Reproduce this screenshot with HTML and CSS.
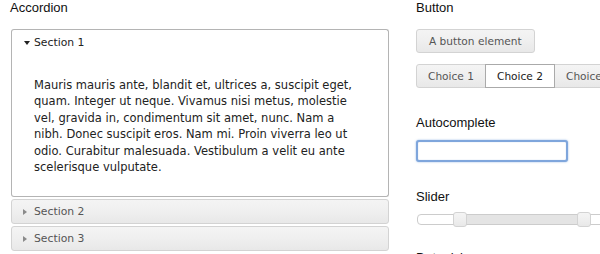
FILE: index.html
```html
<!DOCTYPE html>
<html lang="en">
<head>
<meta charset="utf-8">
<title>Widgets</title>
<link rel="stylesheet" href="styles.css">
</head>
<body>
<div class="page">
  <div class="col col-left">
    <h2 class="title">Accordion</h2>
    <div class="accordion">
      <div class="acc-header is-active"><span class="icon"><span class="tri tri-down"></span></span>Section 1</div>
      <div class="acc-panel">
        <p>Mauris mauris ante, blandit et, ultrices a, suscipit eget, quam. Integer ut neque. Vivamus nisi metus, molestie vel, gravida in, condimentum sit amet, nunc. Nam a nibh. Donec suscipit eros. Nam mi. Proin viverra leo ut odio. Curabitur malesuada. Vestibulum a velit eu ante scelerisque vulputate.</p>
      </div>
      <div class="acc-header"><span class="icon"><span class="tri tri-right"></span></span>Section 2</div>
      <div class="acc-header"><span class="icon"><span class="tri tri-right"></span></span>Section 3</div>
    </div>
  </div>
  <div class="col col-right">
    <section class="demo">
      <h2 class="title">Button</h2>
      <div class="demo-body">
        <button class="btn" type="button">A button element</button>
        <div class="buttonset">
          <button class="btn btn-seg" type="button">Choice 1</button>
          <button class="btn btn-seg is-active" type="button">Choice 2</button>
          <button class="btn btn-seg" type="button">Choice 3</button>
        </div>
      </div>
    </section>
    <section class="demo">
      <h2 class="title">Autocomplete</h2>
      <div class="demo-body">
        <input class="input is-focus" type="text">
      </div>
    </section>
    <section class="demo">
      <h2 class="title">Slider</h2>
      <div class="demo-body">
        <div class="slider">
          <div class="slider-range" style="left:21.2%; right:16.2%;"></div>
          <span class="slider-handle" style="left:21.2%;"></span>
          <span class="slider-handle" style="left:83.8%;"></span>
        </div>
      </div>
    </section>
    <section class="demo">
      <h2 class="title">Datepicker</h2>
    </section>
  </div>
</div>
</body>
</html>
```

FILE: styles.css
```css
html, body {
  margin: 0;
  padding: 0;
  overflow: hidden;
  background: #ffffff;
}

.page {
  display: flex;
  gap: 26px;
  padding-left: 10px;
  width: 700px;
  font-family: "DejaVu Sans", Verdana, sans-serif;
  color: #222222;
}

.col {
  flex: none;
  display: flex;
  flex-direction: column;
}

.col-left {
  width: 380px;
}

.col-right {
  width: 260px;
}

.title {
  margin: 0;
  font-family: "Liberation Sans", Arial, sans-serif;
  font-size: 13px;
  line-height: 16px;
  font-weight: normal;
  color: #111111;
}

/* Accordion */
.accordion {
  margin: 13px 0 0 1px;
  width: 378px;
  display: flex;
  flex-direction: column;
}

.acc-header {
  display: flex;
  align-items: center;
  height: 23px;
  padding-left: 11px;
  border: 1px solid #d3d3d3;
  border-radius: 3px;
  background: linear-gradient(to bottom, #f4f4f4 0%, #efefef 50%, #e8e8e8 100%);
  color: #555555;
  font-size: 10.8px;
  line-height: 15px;
  margin-top: 2px;
}

.acc-header.is-active {
  margin-top: 0;
  background: #ffffff;
  border-color: #b4b4b4;
  border-bottom: 0;
  border-radius: 3px 3px 0 0;
  height: 25px;
  color: #222222;
}

.icon {
  flex: none;
  width: 11px;
  display: flex;
  align-items: center;
}

.tri {
  display: block;
  width: 0;
  height: 0;
}

.tri-down {
  margin-left: 1px;
  border-left: 3.5px solid transparent;
  border-right: 3.5px solid transparent;
  border-top: 4px solid #222222;
}

.tri-right {
  border-top: 3.5px solid transparent;
  border-bottom: 3.5px solid transparent;
  border-left: 4px solid #8a8a8a;
}

.acc-panel {
  border: 1px solid #b4b4b4;
  border-top: 0;
  border-radius: 0 0 3px 3px;
  padding: 22px 22px 21px 22px;
  background: #ffffff;
}

.acc-panel p {
  margin: 0;
  font-size: 11.5px;
  line-height: 16.4px;
  color: #222222;
}

/* Right column demos */
.demo {
  display: flex;
  flex-direction: column;
  margin-bottom: 27px;
}

.demo:nth-child(3) {
  margin-bottom: 25px;
}

.demo-body {
  display: flex;
  flex-direction: column;
  align-items: flex-start;
  margin-top: 9px;
}

.demo:first-child .demo-body {
  margin-top: 13px;
  gap: 11px;
}

.btn {
  margin: 0;
  height: 24px;
  padding: 0 12px;
  border: 1px solid #d3d3d3;
  border-radius: 3px;
  background: linear-gradient(to bottom, #f4f4f4 0%, #efefef 50%, #e8e8e8 100%);
  color: #555555;
  font-family: "DejaVu Sans", Verdana, sans-serif;
  font-size: 10.6px;
  line-height: 14px;
  white-space: nowrap;
}

.buttonset {
  display: flex;
}

.btn-seg {
  padding: 0 11px;
  border-radius: 0;
  position: relative;
}

.btn-seg + .btn-seg {
  margin-left: -1px;
}

.btn-seg:first-child {
  border-radius: 3px 0 0 3px;
}

.btn-seg.is-active {
  background: #ffffff;
  border-color: #aaaaaa;
  color: #212121;
  z-index: 1;
}

.input {
  margin: 0;
  box-sizing: border-box;
  width: 152px;
  height: 22px;
  border: 2px solid #7fa6dc;
  border-radius: 3px;
  box-shadow: 0 0 2px 0 rgba(70, 130, 210, 0.6), inset 0 0 1px rgba(70, 120, 200, 0.5);
  background: #ffffff;
  outline: none;
}

.slider {
  position: relative;
  margin-left: 1px;
  width: 198px;
  height: 9px;
  border: 1px solid #cccccc;
  border-radius: 4px;
  background: #ffffff;
}

.slider-range {
  position: absolute;
  top: 0;
  bottom: 0;
  background: #e4e4e4;
}

.slider-handle {
  position: absolute;
  top: -3px;
  margin-left: -7px;
  box-sizing: border-box;
  width: 14px;
  height: 15px;
  border: 1px solid #d3d3d3;
  border-radius: 3px;
  background: linear-gradient(to bottom, #f4f4f4 0%, #efefef 50%, #e8e8e8 100%);
}
```
